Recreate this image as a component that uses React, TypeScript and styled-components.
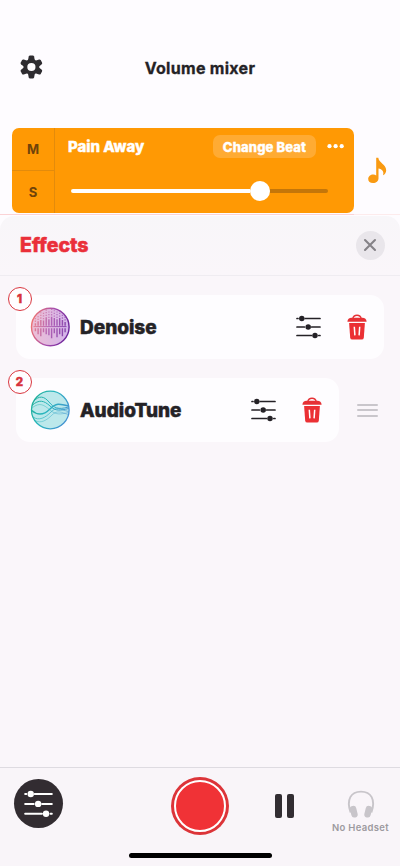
import React from "react";
import styled, { createGlobalStyle } from "styled-components";

const Global = createGlobalStyle`
  * { box-sizing: border-box; }
  body { margin: 0; background: #fefcff; font-family: Inter, "Liberation Sans", sans-serif; color: #242226; }
  button { font: inherit; color: inherit; border: 0; padding: 0; background: none; }
  svg { display: block; flex: none; overflow: visible; }
`;

const Screen = styled.div`
  width: 400px;
  height: 866px;
  overflow: hidden;
  display: flex;
  flex-direction: column;
  background: #fefcff;
`;

const Header = styled.header`
  height: 127px;
  padding: 55px 20px 0;
  display: grid;
  grid-template-columns: 40px 1fr 40px;
  align-items: start;
`;

const Title = styled.h1`
  margin: 3px 0 0;
  text-align: center;
  font-size: 16px;
  line-height: 20px;
  font-weight: 700;
  letter-spacing: 0.3px;
  -webkit-text-stroke: 0.3px currentColor;
`;

const TrackRow = styled.section`
  height: 87px;
  padding: 0.5px 0 1.5px 12px;
  display: flex;
`;

const TrackCard = styled.div`
  width: 342px;
  height: 85px;
  border-radius: 7px;
  background: #ff9904;
  display: flex;
  overflow: hidden;
`;

const SoloMute = styled.div`
  width: 43px;
  display: grid;
  grid-template-rows: 42px 43px;
  border-right: 1px solid #e38b0c;
`;

const Toggle = styled.button`
  font-size: 13px;
  font-weight: 700;
  color: #6f430a;
  & + & { border-top: 1px solid #e38b0c; }
`;

const TrackBody = styled.div`
  flex: 1;
  padding: 7px 10px 0 13px;
`;

const TrackTop = styled.div`
  display: flex;
  align-items: center;
  height: 24px;
`;

const TrackName = styled.div`
  flex: 1;
  color: #fff;
  font-size: 15px;
  font-weight: 800;
  letter-spacing: -0.05px;
  -webkit-text-stroke: 0.4px currentColor;
`;

const ChangeBeat = styled.button`
  width: 103px;
  height: 23px;
  border-radius: 7px;
  background: #ffab33;
  color: #fff;
  font-size: 13px;
  font-weight: 800;
  letter-spacing: 0.12px;
  -webkit-text-stroke: 0.35px currentColor;
  margin-right: 11px;
`;

const Slider = styled.div`
  margin: 22.5px 16px 0 3px;
  height: 20px;
  display: flex;
  align-items: center;
`;

const Level = styled.div<{ $filled?: boolean }>`
  height: 4px;
  width: ${(p) => (p.$filled ? "179px" : "auto")};
  flex: ${(p) => (p.$filled ? "none" : "1")};
  background: ${(p) => (p.$filled ? "#fff" : "#c47609")};
  border-radius: ${(p) => (p.$filled ? "2px 0 0 2px" : "0 2px 2px 0")};
`;

const Thumb = styled.div`
  width: 20px;
  height: 20px;
  border-radius: 50%;
  background: #fff;
`;

const NoteSlot = styled.div`
  padding: 29px 0 0 14px;
`;

const Rule = styled.div`
  height: 1px;
  flex: none;
  background: linear-gradient(90deg, #fbd3d6 354px, #fdebec 354px);
`;

const Sheet = styled.section`
  flex: 1;
  margin-top: 1px;
  border-radius: 14px 14px 0 0;
  background: linear-gradient(#f8f6f9, #faf6fa 60px);
  display: flex;
  flex-direction: column;
`;

const SheetHead = styled.div`
  height: 60px;
  padding: 0 15.5px 1px 20px;
  display: flex;
  align-items: center;
  justify-content: space-between;
  border-bottom: 1px solid #efecf1;
`;

const SheetTitle = styled.h2`
  margin: 0;
  color: #ea2f39;
  font-size: 19.5px;
  font-weight: 800;
  letter-spacing: 0;
  -webkit-text-stroke: 0.5px currentColor;
`;

const Close = styled.button`
  width: 29px;
  height: 29px;
  border-radius: 50%;
  background: #e9e6eb;
  display: grid;
  place-items: center;
`;

const EffectList = styled.div`
  flex: 1;
  padding: 19px 16px 0;
  display: flex;
  flex-direction: column;
  gap: 19px;
`;

const EffectRow = styled.div`
  display: flex;
  align-items: center;
  height: 64px;
`;

const EffectCard = styled.div`
  position: relative;
  flex: 1;
  height: 100%;
  border-radius: 14px;
  background: #fefdff;
  display: flex;
  align-items: center;
  padding: 0 17px 0 14px;
`;

const Order = styled.div`
  position: absolute;
  left: -8.5px;
  top: -8.5px;
  width: 24px;
  height: 24px;
  border: 1.8px solid #d93740;
  border-radius: 50%;
  background: #fffdff;
  color: #d8323b;
  font-size: 11.5px;
  font-weight: 800;
  -webkit-text-stroke: 0.5px currentColor;
  line-height: 22px;
  text-align: center;
`;

const EffectName = styled.div`
  flex: 1;
  margin-left: 10px;
  font-size: 19px;
  font-weight: 800;
  letter-spacing: 0;
  -webkit-text-stroke: 0.5px currentColor;
`;

const IconButton = styled.button<{ $gap?: boolean }>`
  margin-left: ${(p) => (p.$gap ? "26px" : "0")};
  padding-bottom: ${(p) => (p.$gap ? "0" : "1px")};
`;

const Grip = styled.div`
  width: 21px;
  height: 13px;
  margin: 0 6px 0 18.5px;
  display: flex;
  flex-direction: column;
  justify-content: space-between;
`;

const GripLine = styled.div`
  height: 2px;
  border-radius: 1px;
  background: #c9c6cb;
`;

const Footer = styled.footer`
  height: 99px;
  flex: none;
  background: #f9f5f9;
  border-top: 1px solid #dedbe1;
  display: flex;
  flex-direction: column;
  align-items: center;
`;

const Controls = styled.div`
  width: 100%;
  height: 85px;
  display: flex;
  align-items: flex-start;
`;

const MixerButton = styled.button`
  width: 49px;
  height: 49px;
  margin: 11px 0 0 14px;
  border-radius: 50%;
  background: #322c31;
  display: grid;
  place-items: center;
`;

const Record = styled.button`
  width: 58px;
  height: 58px;
  margin: 9px 0 0 108px;
  border-radius: 50%;
  background: #dc3439;
  display: grid;
  place-items: center;
`;

const RecordCore = styled.span`
  width: 52px;
  height: 52px;
  border: 2px solid #fff;
  border-radius: 50%;
  background: #f03236;
`;

const Pause = styled.button`
  display: flex;
  gap: 5px;
  margin: 26px 0 0 46px;
`;

const PauseBar = styled.span`
  width: 7px;
  height: 24px;
  border-radius: 2px;
  background: #322d32;
`;

const Headset = styled.div`
  width: 70px;
  margin: 22px 0 0 31.5px;
  display: flex;
  flex-direction: column;
  align-items: center;
  gap: 3.5px;
  color: #9d9a9f;
  font-size: 9.5px;
  line-height: 12px;
  font-weight: 600;
  letter-spacing: 0.32px;
  white-space: nowrap;
`;

const HomeBar = styled.div`
  width: 143px;
  height: 5px;
  border-radius: 3px;
  background: #000;
`;

const Gear = () => (
  <svg width="22" height="24" viewBox="-11.4 -12 22 24" fill="#2e2c30">
    <circle r="6" fill="none" stroke="#2e2c30" strokeWidth="3.8" />
    {[0, 60, 120, 180, 240, 300].map((a) => (
      <path key={a} transform={`rotate(${a})`} d="M-3.4-6.5 L-2.7-10.4 Q-2.4-11.5-1.3-11.5 H1.3 Q2.4-11.5 2.7-10.4 L3.4-6.5Z" />
    ))}
  </svg>
);

const Sliders = ({ color = "#242126", width = 25 }: { color?: string; width?: number }) => (
  <svg width={width} height={width * 0.96} viewBox="0 0 25 24" fill={color} stroke={color} strokeWidth="1.7" strokeLinecap="round">
    <path d="M1 3.5H2M9.2 3.5H24M1 12H8.4M15.6 12H24M1 20.5H15.5M22.8 20.5H24" />
    <g stroke="none">
      <circle cx="5.8" cy="3.5" r="2.75" />
      <circle cx="12.2" cy="12" r="2.75" />
      <circle cx="19" cy="20.5" r="2.75" />
    </g>
  </svg>
);

const Trash = () => (
  <svg width="20" height="26" viewBox="0 0 20 26">
    <path d="M5.8 4.6C6.3 1.9 7.5 1.3 10 1.3S13.7 1.9 14.2 4.6" fill="none" stroke="#e63135" strokeWidth="1.4" />
    <path d="M.4 7.7C.5 5.2 2.2 3.8 4.6 3.8H15.4C17.8 3.8 19.5 5.2 19.6 7.7Z" fill="#e63135" />
    <path d="M2.1 9H17.9L16.8 23.7Q16.6 25.6 14.7 25.6H5.3Q3.4 25.6 3.2 23.7Z" fill="#eb3034" />
    <path d="M7.3 12.7L7.9 21.4M12.7 12.7L12.1 21.4" stroke="#fff" strokeWidth="1.5" />
  </svg>
);

const Note = () => (
  <svg width="19" height="27" viewBox="0 0 19 27" fill="#f99a12">
    <path d="M8.2.7H10.3C10.7 5.7 18.2 7.2 18.2 13.2C18.2 15.4 17 17.4 15 18.2C16.4 14.8 14 12.2 10.5 11.6V21.3C10.5 24.3 8.2 26.1 5 26.1C2.1 26.1 .2 24.5 .2 22.1C.2 19.5 2.5 17.6 5.3 17.6C6.5 17.6 7.5 17.9 8.2 18.4Z" />
  </svg>
);

const upper = [4, 7, 9, 8, 13, 10, 14, 12, 10, 12, 9, 6];
const lower = [3, 6, 8, 4, 6, 7, 10, 5, 9, 6, 8, 4];

const DenoiseArt = () => (
  <svg width="40" height="40" viewBox="0 0 40 40">
    <defs>
      <linearGradient id="dnRing" gradientUnits="userSpaceOnUse" x1="0" x2="40" y1="14" y2="24">
        <stop stopColor="#f3776e" />
        <stop offset=".5" stopColor="#a74fae" />
        <stop offset="1" stopColor="#672099" />
      </linearGradient>
      <linearGradient id="dnFill">
        <stop stopColor="#edbfd5" />
        <stop offset="1" stopColor="#d3b4eb" />
      </linearGradient>
    </defs>
    <circle cx="20.3" cy="20" r="18.8" fill="url(#dnFill)" stroke="url(#dnRing)" strokeWidth="1.4" />
    <path d="M3.5 19.6H36.5" stroke="url(#dnRing)" strokeWidth=".8" />
    <g stroke="url(#dnRing)" strokeWidth="1.4" opacity=".8">
      {upper.map((h, i) => (
        <path key={i} d={`M${5.4 + i * 2.7} 18.8l.01-${h * 0.65}`} />
      ))}
      {lower.map((h, i) => (
        <path key={i} d={`M${5.4 + i * 2.7} 21.2l.01 ${h}`} />
      ))}
    </g>
    <g stroke="url(#dnRing)" strokeWidth="1.3" strokeDasharray="1.3 1.4" opacity=".6">
      {upper.map((h, i) => (
        <path key={i} d={`M${5.4 + i * 2.7} ${17.5 - h * 0.65}l.01-${i < 2 || i > 9 ? 4 : 6.5}`} />
      ))}
    </g>
  </svg>
);

const TuneArt = () => (
  <svg width="40" height="40" viewBox="0 0 40 40">
    <defs>
      <linearGradient id="atRing" gradientUnits="userSpaceOnUse" x1="0" x2="40" y1="0" y2="20">
        <stop stopColor="#20ad8b" />
        <stop offset=".5" stopColor="#29b6bd" />
        <stop offset="1" stopColor="#4594d1" />
      </linearGradient>
    </defs>
    <circle cx="20.3" cy="20" r="18.8" fill="#bce8eb" stroke="url(#atRing)" strokeWidth="1.3" />
    <g fill="none" stroke="url(#atRing)" strokeWidth="1">
      <path d="M3 12C9 5 14 6 19 12S28 20 38.5 17" />
      <path d="M2 15.5C9 9 14 10.5 20 16S30 20.5 38.8 18.5" />
      <path d="M1.8 20.5C8 26 14 25 20 19S29 13.5 38.5 16" strokeWidth="1.4" />
      <path d="M3 27C9 31 15 28 21 22S30 19.5 38.5 21.5" opacity=".65" />
      <path d="M5 30.5C11 34 17 30 22 25S31 22 38 24.5" opacity=".45" />
      <path d="M2.5 17.5C10 12 14 15 20 20S30 24.5 38.5 22.5" opacity=".45" />
    </g>
  </svg>
);

const Headphones = () => (
  <svg width="26" height="28" viewBox="0 0 26 28" fill="#c8c5ca">
    <path d="M2.6 22.5C-2 9.5 3 1.6 13 1.6S28 9.5 23.4 22.5" fill="none" stroke="#c8c5ca" strokeWidth="1.9" />
    <rect x="2.6" y="15.8" width="6.4" height="11.8" rx="3" transform="rotate(-14 5.8 21.7)" />
    <rect x="17" y="15.8" width="6.4" height="11.8" rx="3" transform="rotate(14 20.2 21.7)" />
  </svg>
);

interface EffectProps {
  order: number;
  name: string;
  art: React.ReactNode;
  movable?: boolean;
}

const Effect = ({ order, name, art, movable }: EffectProps) => (
  <EffectRow>
    <EffectCard>
      <Order>{order}</Order>
      {art}
      <EffectName>{name}</EffectName>
      <IconButton aria-label="Adjust"><Sliders /></IconButton>
      <IconButton $gap aria-label="Delete"><Trash /></IconButton>
    </EffectCard>
    {movable && (
      <Grip>
        <GripLine />
        <GripLine />
        <GripLine />
      </Grip>
    )}
  </EffectRow>
);

export default function App() {
  return (
    <Screen>
      <Global />
      <Header>
        <Gear />
        <Title>Volume mixer</Title>
      </Header>
      <TrackRow>
        <TrackCard>
          <SoloMute>
            <Toggle>M</Toggle>
            <Toggle>S</Toggle>
          </SoloMute>
          <TrackBody>
            <TrackTop>
              <TrackName>Pain Away</TrackName>
              <ChangeBeat>Change Beat</ChangeBeat>
              <svg width="17" height="4" viewBox="0 0 17 4" fill="#fff">
                <circle cx="2.5" cy="1.2" r="2.1" />
                <circle cx="8.6" cy="1.2" r="2.1" />
                <circle cx="14.7" cy="1.2" r="2.1" />
              </svg>
            </TrackTop>
            <Slider>
              <Level $filled />
              <Thumb />
              <Level />
            </Slider>
          </TrackBody>
        </TrackCard>
        <NoteSlot><Note /></NoteSlot>
      </TrackRow>
      <Rule />
      <Sheet>
        <SheetHead>
          <SheetTitle>Effects</SheetTitle>
          <Close aria-label="Close">
            <svg width="12" height="12" viewBox="0 0 12 12" stroke="#858287" strokeWidth="2.1" strokeLinecap="round">
              <path d="M1 1L11 11M11 1L1 11" />
            </svg>
          </Close>
        </SheetHead>
        <EffectList>
          <Effect order={1} name="Denoise" art={<DenoiseArt />} />
          <Effect order={2} name="AudioTune" art={<TuneArt />} movable />
        </EffectList>
      </Sheet>
      <Footer>
        <Controls>
          <MixerButton aria-label="Mixer"><Sliders color="#fff" width={29} /></MixerButton>
          <Record aria-label="Record"><RecordCore /></Record>
          <Pause aria-label="Pause">
            <PauseBar />
            <PauseBar />
          </Pause>
          <Headset>
            <Headphones />
            No Headset
          </Headset>
        </Controls>
        <HomeBar />
      </Footer>
    </Screen>
  );
}
